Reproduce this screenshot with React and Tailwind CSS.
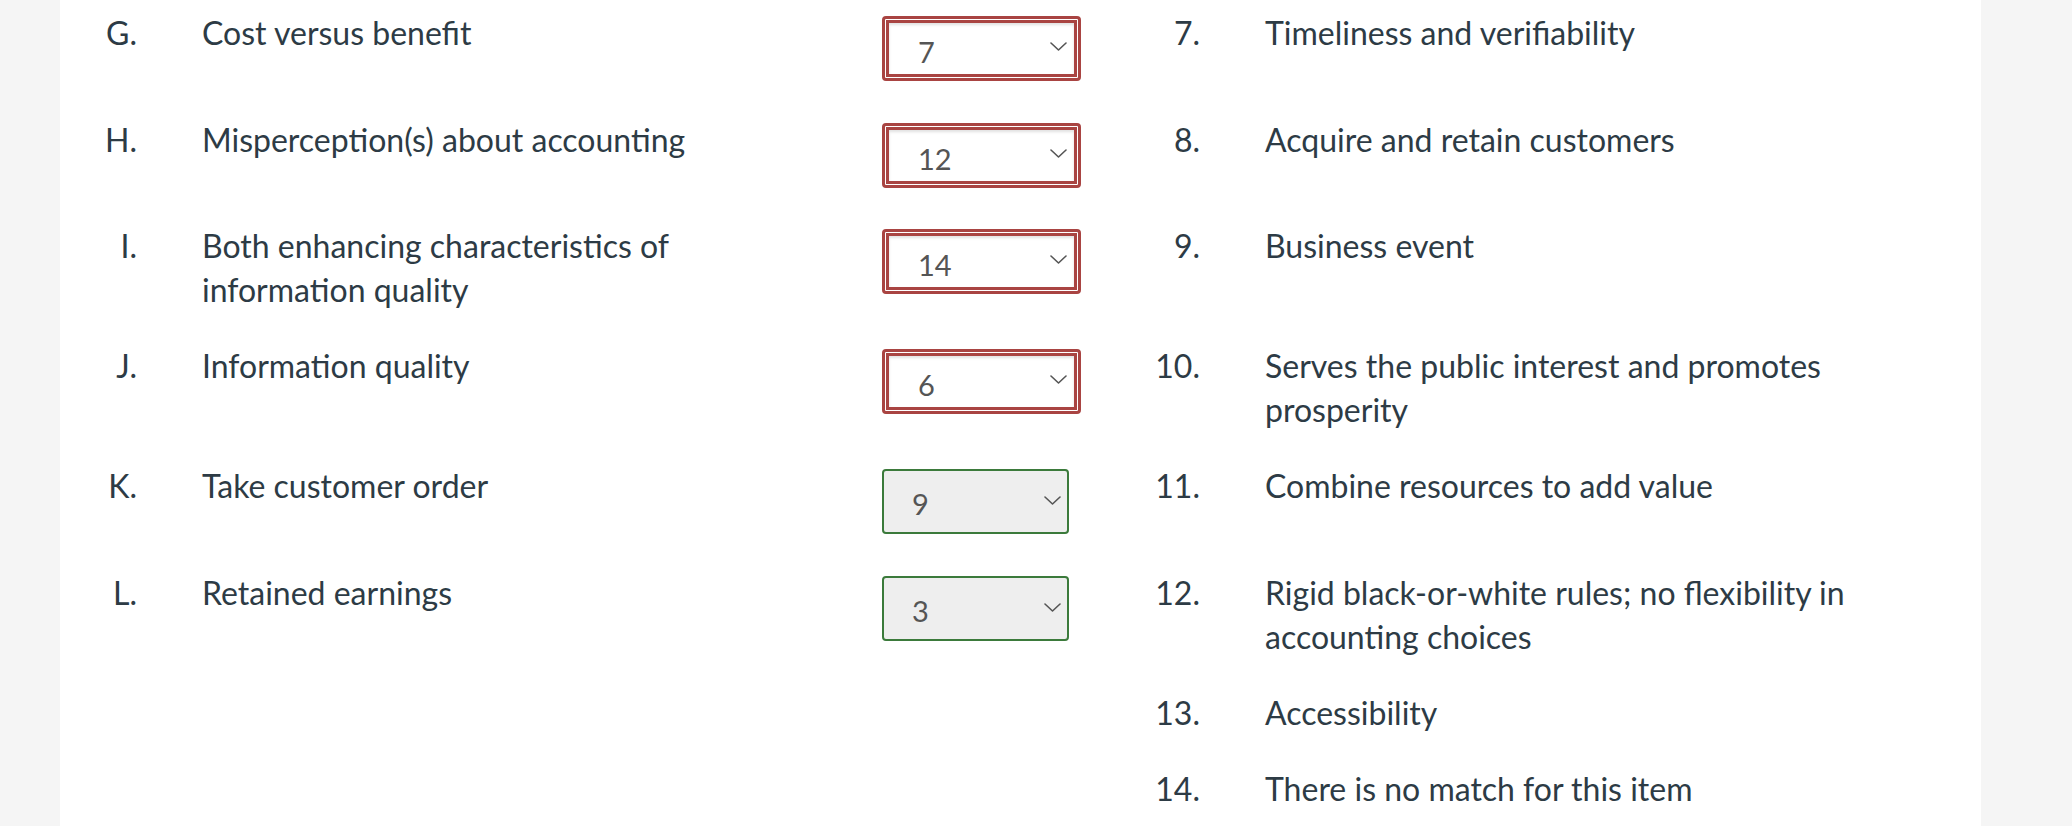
const rows = [
  { letter: "G.", text: "Cost versus benefit", value: "7", ok: false, num: "7.", answer: "Timeliness and verifiability" },
  { letter: "H.", text: "Misperception(s) about accounting", value: "12", ok: false, num: "8.", answer: "Acquire and retain customers" },
  { letter: "I.", text: "Both enhancing characteristics of information quality", value: "14", ok: false, num: "9.", answer: "Business event" },
  { letter: "J.", text: "Information quality", value: "6", ok: false, num: "10.", answer: "Serves the public interest and promotes prosperity" },
  { letter: "K.", text: "Take customer order", value: "9", ok: true, num: "11.", answer: "Combine resources to add value" },
  { letter: "L.", text: "Retained earnings", value: "3", ok: true, num: "12.", answer: "Rigid black-or-white rules; no flexibility in accounting choices" },
  { num: "13.", answer: "Accessibility" },
  { num: "14.", answer: "There is no match for this item" },
];

function Chevron({ className }) {
  return (
    <svg viewBox="0 0 17 9" className={className} fill="none" stroke="#555" strokeWidth="1.6" strokeLinecap="round" strokeLinejoin="round">
      <path d="M1 1 L8.5 8 L16 1" />
    </svg>
  );
}

function Picker({ value, ok }) {
  if (ok) {
    return (
      <div className="w-[187px] h-[65px] rounded-[4px] border-2 border-[#3b7a3b] bg-[#eeeeee] flex items-center justify-between pl-[28px] pr-[6px] pt-[4px]">
        <span className="text-[29px] text-[#555] leading-none">{value}</span>
        <Chevron className="w-[17px] h-[9px] mb-[6px]" />
      </div>
    );
  }
  return (
    <div className="w-[199px] h-[65px] rounded-[4px] border-[3px] border-[#a94442] bg-white p-px">
      <div className="w-full h-full border-[3px] border-[#a94442] bg-white shadow-[inset_0_2px_3px_rgba(0,0,0,0.12)] flex items-center justify-between pl-[29px] pr-[7px] pt-[6px]">
        <span className="text-[29px] text-[#555] leading-none">{value}</span>
        <Chevron className="w-[17px] h-[9px] mb-[10px]" />
      </div>
    </div>
  );
}

export default function App() {
  return (
    <div className="w-full h-[826px] overflow-hidden bg-[#f5f5f5] font-['Lato','Liberation_Sans',sans-serif] text-[#2d3b45]">
      <div className="ml-[60px] w-[1921px] h-full bg-white pt-[11px]">
        {rows.map((r, i) => (
          <div key={i} className="flex items-start pb-[32px] text-[32px] leading-[44px]">
            <div className="w-[77px] text-right shrink-0">{r.letter}</div>
            <div className="ml-[65px] w-[560px] shrink-0">{r.text}</div>
            <div className="ml-[120px] w-[199px] shrink-0">
              {r.value && (
                <div className="pt-[5px] pb-[4.5px]">
                  <Picker value={r.value} ok={r.ok} />
                </div>
              )}
            </div>
            <div className="w-[119px] text-right shrink-0">{r.num}</div>
            <div className="ml-[65px] w-[640px] shrink-0">{r.answer}</div>
          </div>
        ))}
      </div>
    </div>
  );
}
